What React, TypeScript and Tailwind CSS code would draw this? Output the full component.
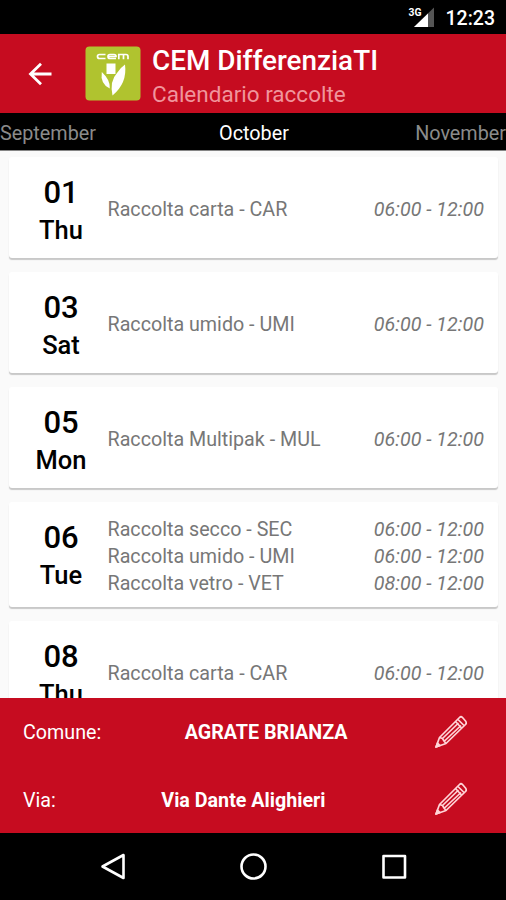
import React from "react";

type Entry = { label: string; time: string };
type Day = { date: string; day: string; height: string; entries: Entry[] };

const days: Day[] = [
  { date: "01", day: "Thu", height: "h-[101px]", entries: [{ label: "Raccolta carta - CAR", time: "06:00 - 12:00" }] },
  { date: "03", day: "Sat", height: "h-[101px]", entries: [{ label: "Raccolta umido - UMI", time: "06:00 - 12:00" }] },
  { date: "05", day: "Mon", height: "h-[101px]", entries: [{ label: "Raccolta Multipak - MUL", time: "06:00 - 12:00" }] },
  {
    date: "06",
    day: "Tue",
    height: "h-[105px]",
    entries: [
      { label: "Raccolta secco - SEC", time: "06:00 - 12:00" },
      { label: "Raccolta umido - UMI", time: "06:00 - 12:00" },
      { label: "Raccolta vetro - VET", time: "08:00 - 12:00" },
    ],
  },
  { date: "08", day: "Thu", height: "h-[101px]", entries: [{ label: "Raccolta carta - CAR", time: "06:00 - 12:00" }] },
];

function StatusBar() {
  return (
    <div className="flex h-[34px] shrink-0 items-center justify-end bg-black pr-[11px] text-white">
      <svg className="h-[24px] w-[28px]" viewBox="0 0 28 24">
        <path d="M26 2.500V22H6z" fill="#555" />
        <path d="M20 8.500V22H6z" fill="#fff" />
        <text x="0.5" y="11" fill="#fff" fontFamily="Roboto, sans-serif" fontWeight="700" fontSize="10.5" textLength="13" lengthAdjust="spacingAndGlyphs">3G</text>
      </svg>
      <span className="ml-[10px] mt-[3px] text-[19.5px] font-medium leading-none">12:23</span>
    </div>
  );
}

function Logo() {
  return (
    <svg className="ml-[33px] h-[56px] w-[56px] shrink-0" viewBox="0 0 56 56">
      <rect x="0.5" y="0.5" width="55" height="54" rx="4" fill="#b0c32f" />
      <g fill="none" stroke="#fff" strokeWidth="1.7">
        <path d="M20.500 12.500h-6q-2 0-2-2t2-2h6" />
        <path d="M31 12.500h-6q-2 0-2-2t2-2h4q2 0 2 2h-7.500" />
        <path d="M33.800 13.300V8.500h7.200q2 0 2 2v2.800M38.500 8.500v4.800" />
      </g>
      <g fill="#fff">
        <path d="M21.500 17.500h9v10.500h-9z" />
        <path d="M40 18.500Q42.500 37 27.500 49.500Q24.500 35 32 27Q35 22 40 18.500Z" />
        <path d="M16.800 26Q25.500 34 24.800 42.500Q15 38 16.800 26Z" />
      </g>
    </svg>
  );
}

function Header() {
  return (
    <header className="flex h-[79px] shrink-0 items-center bg-[#c60c20]">
      <svg className="ml-[28px] h-[24px] w-[24px] shrink-0" viewBox="0 0 24 24" fill="none" stroke="#fff" strokeWidth="2.8">
        <path d="M23.500 12H2.500M13 1.800L2.500 12L13 22.200" />
      </svg>
      <Logo />
      <div className="ml-[11px] flex flex-col whitespace-nowrap pt-[6px]">
        <h1 className="text-[27.9px] font-medium leading-[34px] text-white">CEM DifferenziaTI</h1>
        <p className="text-[22.500px] leading-[32px] text-[#f0959c]">Calendario raccolte</p>
      </div>
    </header>
  );
}

function MonthTabs() {
  return (
    <nav className="grid h-[38px] shrink-0 grid-cols-3 items-center border-b border-[#858585] bg-black pt-[5px] text-[19.8px] leading-[28px] text-[#8b8b8b]">
      <span>September</span>
      <span className="pl-[2px] text-center text-white">October</span>
      <span className="text-right">November</span>
    </nav>
  );
}

function DayCard({ item }: { item: Day }) {
  return (
    <article className={"flex shrink-0 items-center rounded-[3px] bg-white pr-[14px] shadow-[0_2px_1px_#c8c8c8] " + item.height}>
      <div className="flex w-[104px] shrink-0 flex-col items-center self-start pt-[17px] font-medium text-black">
        <span className="text-[31px] leading-[38px]">{item.date}</span>
        <span className="text-[25.500px] leading-[36px]">{item.day}</span>
      </div>
      <div className="-ml-[5.500px] flex flex-1 flex-col pt-[6px] text-[19.7px] leading-[26.7px] text-[#777]">
        {item.entries.map((entry) => (
          <div key={entry.label} className="flex justify-between whitespace-nowrap">
            <span>{entry.label}</span>
            <span className="italic">{entry.time}</span>
          </div>
        ))}
      </div>
    </article>
  );
}

function Pencil() {
  return (
    <svg className="h-[34px] w-[34px]" viewBox="0 0 34 34" fill="none" stroke="#ffd5d8" strokeWidth="1.7" strokeLinejoin="round">
      <path d="M2 32L5.500 22.500L25.500 2.500Q27 1 28.500 2.500L31.500 6Q33 8 31.500 9.500L12 28.500Z" />
      <path d="M5.500 22.500L8.500 23.500L10 26L12 28.500M8.500 23.500L24.500 8M10.500 26L27 10.500M21.500 6.500L27.500 13M24 4.500L30 10.500" />
      <path d="M2 32L3.500 28L6 30.500Z" fill="#ffd5d8" />
    </svg>
  );
}

function LocationRow({ label, value }: { label: string; value: string }) {
  return (
    <div className="flex h-[67.5px] items-center pl-[23px] pr-[38px] text-[19.7px] text-white">
      <span className="pt-[3px]">{label}</span>
      <span className="flex-1 pr-[3px] pt-[3px] text-center font-bold">{value}</span>
      <Pencil />
    </div>
  );
}

function NavigationBar() {
  return (
    <footer className="flex h-[67px] shrink-0 items-center justify-between bg-black pl-[99px] pr-[98px]">
      <svg className="h-[28px] w-[28px]" viewBox="0 0 28 28" fill="none" stroke="#fff" strokeWidth="2.6" strokeLinejoin="round">
        <path d="M3.500 13.500L24.500 2V25Z" />
      </svg>
      <svg className="h-[28px] w-[28px]" viewBox="0 0 28 28" fill="none" stroke="#fff" strokeWidth="2.6">
        <circle cx="13.500" cy="13.500" r="12" />
      </svg>
      <svg className="h-[28px] w-[28px]" viewBox="0 0 28 28" fill="none" stroke="#fff" strokeWidth="2.6" strokeLinejoin="round">
        <rect x="3.500" y="3" width="21.500" height="21.500" />
      </svg>
    </footer>
  );
}

export default function App() {
  return (
    <div className="flex h-[900px] w-[506px] flex-col overflow-hidden bg-[#fafafa] font-['Roboto',sans-serif]">
      <StatusBar />
      <Header />
      <MonthTabs />
      <main className="flex min-h-0 flex-1 flex-col gap-[14px] overflow-hidden pl-[9px] pr-[8px] pt-[6px]">
        {days.map((item) => (
          <DayCard key={item.date} item={item} />
        ))}
      </main>
      <section className="h-[135px] shrink-0 bg-[#c60c20]">
        <LocationRow label="Comune:" value="AGRATE BRIANZA" />
        <LocationRow label="Via:" value="Via Dante Alighieri" />
      </section>
      <NavigationBar />
    </div>
  );
}
